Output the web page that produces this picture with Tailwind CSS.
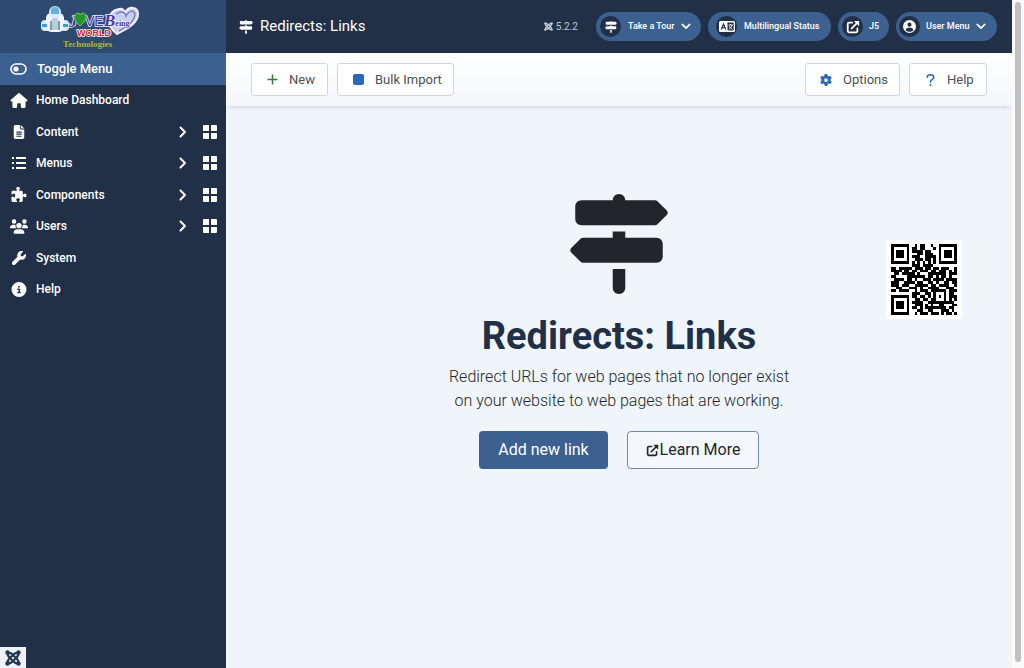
<!DOCTYPE html>
<html lang="en">
<head>
<meta charset="utf-8">
<title>Redirects: Links</title>
<script src="https://cdn.jsdelivr.net/npm/@tailwindcss/browser@4"></script>
</head>
<body class="flex min-h-screen bg-[#f0f4fb] font-['Roboto',sans-serif] text-[#22262a]">
<svg class="hidden" aria-hidden="true">
  <symbol id="signs" viewBox="0 0 512 512"><path d="M224 32H64C46.3 32 32 46.3 32 64v64c0 17.7 14.3 32 32 32H441.4c4.2 0 8.3-1.7 11.3-4.7l48-48c6.2-6.2 6.2-16.4 0-22.6l-48-48c-3-3-7.1-4.7-11.3-4.7H288c0-17.7-14.3-32-32-32s-32 14.3-32 32zM480 256c0-17.7-14.3-32-32-32H288V192H224v32H70.6c-4.2 0-8.3 1.7-11.3 4.7l-48 48c-6.2 6.2-6.2 16.4 0 22.6l48 48c3 3 7.1 4.7 11.3 4.7H448c17.7 0 32-14.3 32-32V256zM288 480V384H224v96c0 17.7 14.3 32 32 32s32-14.3 32-32z"/></symbol>
  <symbol id="grid" viewBox="0 0 14 14"><path d="M1 0h5v6H0V1a1 1 0 0 1 1-1zM8 0h5a1 1 0 0 1 1 1v5H8zM0 8h6v6H1a1 1 0 0 1-1-1zM8 8h6v5a1 1 0 0 1-1 1H8z"/></symbol>
  <symbol id="right" viewBox="0 0 8 12"><path d="M1.5 1.5 6 6l-4.500 4.500" fill="none" stroke="currentColor" stroke-width="2" stroke-linecap="round" stroke-linejoin="round"/></symbol>
  <symbol id="down" viewBox="0 0 12 8"><path d="M1.500 1.500 6 6l4.500-4.500" fill="none" stroke="currentColor" stroke-width="2" stroke-linecap="round" stroke-linejoin="round"/></symbol>
  <symbol id="external" viewBox="0 0 16 16"><path d="M7 3H3.500A1.500 1.500 0 0 0 2 4.500v8A1.500 1.500 0 0 0 3.500 14h8a1.500 1.500 0 0 0 1.500-1.500V9.500M6.500 9.500 13 3" fill="none" stroke="currentColor" stroke-width="2" stroke-linecap="round"/><path d="M9 1h5.500a.5.500 0 0 1 .5.500V7z"/></symbol>
  <symbol id="joomla" viewBox="0 0 16 16"><g fill="none" stroke="currentColor" stroke-width="2.200" stroke-linejoin="round"><path d="M2.500 3C6 2 7 4 8 5l4 4c1.500 1.500 1.500 3 1 4.500M13.500 3C10 2 9 4 8 5L4 9c-1.500 1.500-1.500 3-1 4.500M3 2.500C2 6 4 7 5 8l3 3c2 2 3 3 5.500 2M13 2.500C14 6 12 7 11 8l-3 3c-2 2-3 3-5.500 2"/></g><circle cx="2.500" cy="2.500" r="2.200"/><circle cx="13.500" cy="2.500" r="2.200"/><circle cx="2.500" cy="13.500" r="2.200"/><circle cx="13.500" cy="13.500" r="2.200"/></symbol>
</svg>

<aside class="flex w-[226px] shrink-0 flex-col bg-[#212f47] text-white">
  <a href="#" aria-label="Love Being World Technologies" class="block h-[53px] bg-[#2f4a70]">
    <svg class="h-[53px] w-[150px]" viewBox="0 0 150 53">
      <g fill="#d9eaf5"><rect x="41" y="20" width="9" height="11" rx="4"/><rect x="60" y="20" width="9" height="11" rx="4"/><rect x="46" y="13" width="18" height="19" rx="5" fill="#eef6fb"/><circle cx="55" cy="12" r="6"/></g>
      <path d="M51 9q4-5 8 0v5h-8z" fill="#62b5dd"/><path d="M42 24h5v3h-5zM63 24h5v3h-5z" fill="#389ed0"/><path d="M52 18h6v12h-6z" fill="#b6cfdf"/><path d="M51 21v9M59 21v9" stroke="#26394e"/>
      <path d="M117 34C104 24 108 11 119 9q5-1 6 4c3-7 13-7 13 1 0 9-10 14-21 20z" fill="#c9d0ee" stroke="#f1efff" stroke-width="2"/>
      <path d="M119 31c8-4 15-9 16-16 0-5-6-5-9 1-1-5-6-5-10-2" fill="none" stroke="#7c79bc" stroke-width="1.500"/>
      <g font-family="Liberation Serif,serif" font-weight="bold" fill="#4936a0" stroke="#f2f1ff" stroke-width="1.500" paint-order="stroke">
        <text x="69" y="27" font-size="17" font-style="italic">J</text>
        <text x="85" y="26" font-size="14" font-family="Liberation Sans,sans-serif" font-weight="normal">VE</text>
        <text x="104" y="26" font-size="17" font-style="italic">B<tspan font-size="8" font-style="normal">eing</tspan></text>
      </g>
      <path d="M80 26c-8-6-6-13-2-13q2 0 2 2 1-2 3-2c4 0 5 7-3 13z" fill="#239826" stroke="#9ade7c" stroke-width=".7"/>
      <text x="77" y="36" font-family="Liberation Sans,sans-serif" font-size="9" font-weight="bold" fill="#e01b24" stroke="#fff" stroke-width="1.500" paint-order="stroke">WORLD</text>
      <text x="63" y="47" font-family="Liberation Serif,serif" font-size="9" font-weight="bold" fill="#a9b765" stroke="#304b31" stroke-width=".8" paint-order="stroke">Technologies</text>
    </svg>
  </a>
  <nav class="grid h-[252px] auto-rows-fr text-[12px] font-medium">
    <a href="#" class="flex items-center gap-[10px] bg-[#3c608f] pl-[10px] text-[13px]">
      <svg class="h-3 w-[17px]" viewBox="0 0 17 12"><rect x="1" y="1" width="15" height="10" rx="5" fill="none" stroke="currentColor" stroke-width="1.600"/><circle cx="6" cy="6" r="2.600" fill="currentColor"/></svg>Toggle Menu</a>
    <a href="#" class="flex items-center gap-2 pl-[10px]"><svg class="h-[15px] w-[18px]" viewBox="0 0 576 512" fill="currentColor"><path d="M575.8 255.5c0 18-15 32.1-32 32.1h-32l.7 160.2c0 2.700-.2 5.400-.5 8.100V472c0 22.100-17.900 40-40 40H392c-22.100 0-40-17.900-40-40V384c0-17.700-14.300-32-32-32H256c-17.700 0-32 14.300-32 32v88c0 22.100-17.900 40-40 40H104c-22.100 0-40-17.900-40-40V287.600H32c-18 0-32-14-32-32.100 0-9 3-17 10-24L266.400 8c7-7 15-8 22-8s15 2 21 7L564.800 231.500c8 7 12 15 11 24z"/></svg>Home Dashboard</a>
    <div class="flex items-center pr-[9px] pl-[10px]"><a href="#" class="flex flex-1 items-center gap-2"><svg class="h-[14px] w-[18px]" viewBox="0 0 384 512" fill="currentColor"><path fill-rule="evenodd" d="M64 0C28.700 0 0 28.700 0 64V448c0 35.300 28.700 64 64 64H320c35.300 0 64-28.700 64-64V160H256c-17.700 0-32-14.300-32-32V0zM256 0V128H384zM96 240H288v40H96zM96 315H288v40H96zM96 390H288v40H96z"/></svg>Content</a><svg class="mr-4 h-3 w-2"><use href="#right"/></svg><a href="#" aria-label="Content dashboard"><svg class="h-[14px] w-[14px]" fill="currentColor"><use href="#grid"/></svg></a></div>
    <div class="flex items-center pr-[9px] pl-[10px]"><a href="#" class="flex flex-1 items-center gap-2"><svg class="h-3 w-[18px]" viewBox="0 0 18 12" fill="currentColor"><path d="M2 0h2v2H2zM2 5h2v2H2zM2 10h2v2H2zM6 0h10v2H6zM6 5h10v2H6zM6 10h10v2H6z"/></svg>Menus</a><svg class="mr-4 h-3 w-2"><use href="#right"/></svg><a href="#" aria-label="Menus dashboard"><svg class="h-[14px] w-[14px]" fill="currentColor"><use href="#grid"/></svg></a></div>
    <div class="flex items-center pr-[9px] pl-[10px]"><a href="#" class="flex flex-1 items-center gap-2"><svg class="h-[15px] w-[18px]" viewBox="0 0 512 512" fill="currentColor"><path d="M192 104.8c0-9.2-5.8-17.3-13.2-22.8C167.2 73.3 160 61.3 160 48c0-26.5 28.7-48 64-48s64 21.5 64 48c0 13.3-7.2 25.3-18.8 34c-7.4 5.5-13.2 13.6-13.2 22.8c0 12.8 10.4 23.2 23.2 23.2H336c26.5 0 48 21.5 48 48v56.8c0 12.8 10.4 23.2 23.2 23.2c9.2 0 17.3-5.8 22.8-13.2c8.7-11.6 20.7-18.8 34-18.8c26.5 0 48 28.7 48 64s-21.5 64-48 64c-13.3 0-25.3-7.2-34-18.8c-5.5-7.4-13.6-13.2-22.8-13.2c-12.8 0-23.2 10.4-23.2 23.2V464c0 26.5-21.5 48-48 48H279.2c-12.8 0-23.2-10.4-23.2-23.2c0-9.2 5.8-17.3 13.2-22.8c11.6-8.7 18.8-20.7 18.8-34c0-26.5-28.7-48-64-48s-64 21.5-64 48c0 13.3 7.2 25.3 18.8 34c7.4 5.5 13.2 13.6 13.2 22.8c0 12.8-10.4 23.2-23.2 23.2H48c-26.5 0-48-21.5-48-48V343.2C0 330.4 10.4 320 23.2 320c9.2 0 17.3 5.8 22.8 13.2C54.7 344.8 66.7 352 80 352c26.5 0 48-28.7 48-64s-21.5-64-48-64c-13.3 0-25.3 7.2-34 18.8C40.5 250.2 32.4 256 23.2 256C10.4 256 0 245.6 0 232.8V176c0-26.5 21.5-48 48-48H168.8c12.8 0 23.2-10.4 23.2-23.2z"/></svg>Components</a><svg class="mr-4 h-3 w-2"><use href="#right"/></svg><a href="#" aria-label="Components dashboard"><svg class="h-[14px] w-[14px]" fill="currentColor"><use href="#grid"/></svg></a></div>
    <div class="flex items-center pr-[9px] pl-[10px]"><a href="#" class="flex flex-1 items-center gap-2"><svg class="h-[15px] w-[18px]" viewBox="0 0 640 512" fill="currentColor"><path d="M144 0a80 80 0 1 1 0 160A80 80 0 1 1 144 0zM512 0a80 80 0 1 1 0 160A80 80 0 1 1 512 0zM0 298.7C0 239.8 47.8 192 106.7 192h42.7c15.9 0 31 3.5 44.6 9.7c-1.300 7.200-1.900 14.700-1.900 22.300c0 38.200 16.800 72.500 43.300 96H21.300C9.600 320 0 310.400 0 298.700zM405.300 320c26.600-23.500 43.300-57.800 43.300-96c0-7.600-.7-15-1.900-22.300c13.600-6.300 28.700-9.700 44.600-9.700h42.700C592.200 192 640 239.800 640 298.700c0 11.800-9.600 21.300-21.300 21.300zM224 224a96 96 0 1 1 192 0 96 96 0 1 1-192 0zM128 485.300C128 411.700 187.700 352 261.300 352H378.700C452.300 352 512 411.700 512 485.300c0 14.700-11.900 26.700-26.700 26.700H154.700c-14.700 0-26.700-11.900-26.700-26.700z"/></svg>Users</a><svg class="mr-4 h-3 w-2"><use href="#right"/></svg><a href="#" aria-label="Users dashboard"><svg class="h-[14px] w-[14px]" fill="currentColor"><use href="#grid"/></svg></a></div>
    <a href="#" class="flex items-center gap-2 pl-[10px]"><svg class="h-[14px] w-[18px]" viewBox="0 0 512 512" fill="currentColor"><path d="M352 320c88.400 0 160-71.600 160-160c0-15.300-2.200-30.100-6.200-44.200c-3.100-10.800-16.400-13.200-24.300-5.300l-76.800 76.800c-3 3-7.100 4.700-11.300 4.700H336c-8.800 0-16-7.200-16-16V118.600c0-4.200 1.700-8.300 4.700-11.300l76.800-76.800c7.900-7.900 5.400-21.200-5.300-24.300C382.100 2.200 367.300 0 352 0C263.600 0 192 71.600 192 160c0 19.100 3.400 37.500 9.500 54.500L19.900 396.100C7.200 408.800 0 426.100 0 444.100C0 481.600 30.400 512 67.900 512c18 0 35.300-7.200 48-19.900L297.500 310.500c17 6.200 35.400 9.500 54.500 9.500z"/></svg>System</a>
    <a href="#" class="flex items-center gap-2 pl-[10px]"><svg class="h-[15px] w-[18px]" viewBox="0 0 512 512" fill="currentColor"><path d="M256 512A256 256 0 1 0 256 0a256 256 0 1 0 0 512zM216 336h24V272H216c-13.3 0-24-10.7-24-24s10.7-24 24-24h48c13.3 0 24 10.7 24 24v88h8c13.3 0 24 10.7 24 24s-10.7 24-24 24H216c-13.3 0-24-10.7-24-24s10.7-24 24-24zm40-208a32 32 0 1 1 0 64 32 32 0 1 1 0-64z"/></svg>Help</a>
  </nav>
  <button aria-label="Joomla debug" class="mt-auto grid h-[21px] w-[26px] place-items-center bg-[#eef2f8] text-[#26384f]"><svg class="h-4 w-4" fill="currentColor"><use href="#joomla"/></svg></button>
</aside>

<div class="flex min-w-0 flex-1 flex-col">
  <header class="flex h-[53px] items-center bg-[#212f47] pr-[15px] pl-[13px] text-white">
    <svg class="mr-[7px] h-[14px] w-[14px]" fill="currentColor"><use href="#signs"/></svg>
    <h1 class="text-[15px]">Redirects: Links</h1>
    <div class="ml-auto mr-[18px] flex items-center gap-[3px] text-[10px] text-[#c3cad4]"><svg class="h-[9px] w-[9px]" fill="currentColor"><use href="#joomla"/></svg>5.2.2</div>
    <div class="flex items-center gap-[7px] text-[9px] font-medium">
      <button class="flex h-[29px] w-[105px] items-center rounded-full bg-[#3c608f] pl-1"><span class="mr-[7px] grid h-[21px] w-[21px] place-items-center rounded-full bg-[#212f47]"><svg class="h-3 w-3" fill="currentColor"><use href="#signs"/></svg></span>Take a Tour<svg class="ml-[7px] h-[7px] w-[10px]" viewBox="0 0 12 8"><use href="#down"/></svg></button>
      <button class="flex h-[29px] w-[123px] items-center rounded-full bg-[#3c608f] pl-2"><span class="mr-[7px] grid h-[21px] w-[21px] place-items-center rounded-full bg-[#212f47]"><svg class="h-[11px] w-4" viewBox="0 0 16 11"><rect width="16" height="11" rx="1.500" fill="#fff"/><path d="M8.500 1.500H14a.7.700 0 0 1 .7.700v6.600a.7.700 0 0 1-.7.700H8.500z" fill="#212f47"/><path d="M2.200 8.500 4.500 3l2.300 5.500M3 6.700h3" fill="none" stroke="#212f47" stroke-width="1.200"/><path d="M9.500 4H14M11.700 3v1M13 4c-.4 2-1.500 3.500-3.200 4.300M10.300 5c.6 1.500 1.600 2.600 3.200 3.200" fill="none" stroke="#fff" stroke-width=".9"/></svg></span>Multilingual Status</button>
      <a href="#" class="flex h-[29px] w-[51px] items-center rounded-full bg-[#3c608f] pl-1"><span class="mr-[6px] grid h-[21px] w-[21px] place-items-center rounded-full bg-[#212f47]"><svg class="h-[14px] w-[14px]" fill="currentColor"><use href="#external"/></svg></span>J5</a>
      <button class="flex h-[29px] w-[101px] items-center rounded-full bg-[#3c608f] pl-[3px]"><span class="mr-[6px] grid h-[21px] w-[21px] place-items-center rounded-full bg-[#212f47]"><svg class="h-[13px] w-[13px]" viewBox="0 0 14 14"><circle cx="7" cy="7" r="7" fill="#fff"/><circle cx="7" cy="5" r="2.200" fill="#212f47"/><path d="M2.800 11c.5-2 1.700-2.700 3-2.700h2.400c1.300 0 2.500.7 3 2.700A6 6 0 0 1 2.800 11z" fill="#212f47"/></svg></span>User Menu<svg class="ml-[7px] h-[7px] w-[10px]" viewBox="0 0 12 8"><use href="#down"/></svg></button>
    </div>
  </header>
  <div class="flex h-[53px] items-center gap-[9px] bg-linear-to-b from-white to-[#f3f6fa] px-[25px] text-[13px] text-[#495057] shadow-[0_4px_4px_-3px_#ccd5e3]">
    <button class="flex h-[33px] w-[77px] items-center rounded-[3px] border border-[#ced6e2] bg-white pl-[15px]"><svg class="mr-[11px] h-[11px] w-[11px]" viewBox="0 0 11 11"><path d="M5.500.5v10M.5 5.500h10" stroke="#2f7d42" stroke-width="1.500"/></svg>New</button>
    <button class="flex h-[33px] w-[117px] items-center rounded-[3px] border border-[#ced6e2] bg-white pl-[15px]"><span class="mr-[11px] h-[11px] w-[11px] rounded-[2px] bg-[#2a69b8]"></span>Bulk Import</button>
    <button class="ml-auto flex h-[33px] w-[95px] items-center rounded-[3px] border border-[#ced6e2] bg-white pl-[14px]"><svg class="mr-[11px] h-3 w-3" viewBox="0 0 512 512" fill="#2a69b8"><path d="M495.9 166.6c3.2 8.7 .5 18.4-6.4 24.6l-43.3 39.4c1.1 8.3 1.7 16.8 1.7 25.4s-.6 17.1-1.7 25.4l43.3 39.4c6.9 6.2 9.6 15.9 6.4 24.6c-4.4 11.9-9.7 23.3-15.8 34.3l-4.7 8.1c-6.6 11-14 21.4-22.1 31.2c-5.9 7.2-15.7 9.6-24.5 6.8l-55.7-17.7c-13.4 10.3-28.2 18.9-44 25.4l-12.5 57.1c-2 9.1-9 16.3-18.2 17.8c-13.8 2.3-28 3.5-42.5 3.5s-28.7-1.2-42.5-3.5c-9.2-1.5-16.2-8.7-18.2-17.8l-12.5-57.1c-15.8-6.5-30.6-15.1-44-25.4L83.1 425.9c-8.8 2.8-18.6 .3-24.5-6.8c-8.1-9.8-15.5-20.2-22.1-31.2l-4.7-8.1c-6.1-11-11.4-22.4-15.8-34.3c-3.2-8.7-.5-18.4 6.4-24.6l43.3-39.4C64.6 273.1 64 264.6 64 256s.6-17.1 1.7-25.4L22.4 191.2c-6.9-6.2-9.6-15.9-6.4-24.6c4.4-11.9 9.7-23.3 15.8-34.3l4.7-8.1c6.6-11 14-21.4 22.1-31.2c5.9-7.2 15.7-9.6 24.5-6.8l55.7 17.7c13.4-10.3 28.2-18.9 44-25.4l12.5-57.1c2-9.1 9-16.3 18.2-17.8C227.3 1.2 241.5 0 256 0s28.7 1.2 42.5 3.5c9.2 1.5 16.2 8.7 18.2 17.8l12.5 57.1c15.8 6.5 30.6 15.1 44 25.4l55.7-17.7c8.800-2.800 18.600-.3 24.500 6.800c8.100 9.800 15.500 20.200 22.100 31.200l4.700 8.100c6.100 11 11.400 22.400 15.800 34.300zM256 336a80 80 0 1 0 0-160 80 80 0 1 0 0 160z"/></svg>Options</button>
    <button class="flex h-[33px] w-[78px] items-center rounded-[3px] border border-[#ced6e2] bg-white pl-4"><svg class="mr-3 h-3 w-[9px]" viewBox="0 0 9 12" fill="none"><path d="M1.200 3.300C1.200 0 7.800 0 7.800 3.300 7.800 5.500 4.500 5.500 4.500 8.200" stroke="#2a69b8" stroke-width="1.500" stroke-linecap="round"/><circle cx="4.500" cy="11" r="1" fill="#2a69b8"/></svg>Help</button>
  </div>
  <main class="grid grid-cols-[1fr_auto_1fr]">
    <section class="col-start-2 flex flex-col items-center pt-[88px] text-center">
      <svg class="h-[100px] w-[100px]" fill="currentColor"><use href="#signs"/></svg>
      <h2 class="mt-[22px] text-[38px] leading-[40px] font-bold text-[#212f47]">Redirects: Links</h2>
      <p class="mt-[9px] text-[16px] leading-6 font-light text-[#22262a]">Redirect URLs for web pages that no longer exist<br>on your website to web pages that are working.</p>
      <div class="mt-[18px] flex gap-[19px] text-[16px]">
        <a href="#" class="flex h-[38px] w-[129px] items-center justify-center rounded-[4px] bg-[#3c608f] text-white">Add new link</a>
        <a href="#" class="flex h-[38px] w-[132px] items-center justify-center gap-px rounded-[4px] border border-[#7187a5] bg-[#f4f8fd]"><svg class="h-[13px] w-[13px]" fill="currentColor"><use href="#external"/></svg>Learn More</a>
      </div>
    </section>
    <div class="mt-[134px] mr-[50px] h-[79px] w-[76px] justify-self-end bg-white px-[5px] py-[4px]">
      <svg id="qr" role="img" aria-label="QR code" class="h-full w-full" viewBox="0 0 25 25" preserveAspectRatio="none" shape-rendering="crispEdges"></svg>
    </div>
  </main>
</div>
<div class="w-3 shrink-0 bg-[#fafafa] px-[3px] pt-[2px]"><div class="h-[660px] rounded-full bg-[#c1c1c1]"></div></div>
<script>
const rows = [
  '1111111001011001001111111',
  '1000001011011000101000001',
  '1011101011110110001011101',
  '1011101000110111001011101',
  '1011101011100111101011101',
  '1000001001110110101000001',
  '1111111010101010101111111',
  '0000000011101111000000000',
  '1101111101110110110111001',
  '1111011011011101101110101',
  '0110111110100011111110111',
  '1100001111111011010110100',
  '0111101101001110111101111',
  '1110011110110011010011011',
  '1110111001111101101111001',
  '0011000111010011110001110',
  '1101111001011101111110111',
  '0000000011100110100010110',
  '1111111011011010101010111',
  '1000001001101101100010101',
  '1011101011110011111111110',
  '1011101001110101001100011',
  '1011101011010111111110110',
  '1000001000110011000111010',
  '1111111001011101110101101'
];
let d = '';
rows.forEach((row, y) => [...row].forEach((bit, x) => { if (bit === '1') d += `M${x} ${y}h1v1h-1z`; }));
const path = document.createElementNS('http://www.w3.org/2000/svg', 'path');
path.setAttribute('d', d);
document.getElementById('qr').append(path);
</script>
</body>
</html>
